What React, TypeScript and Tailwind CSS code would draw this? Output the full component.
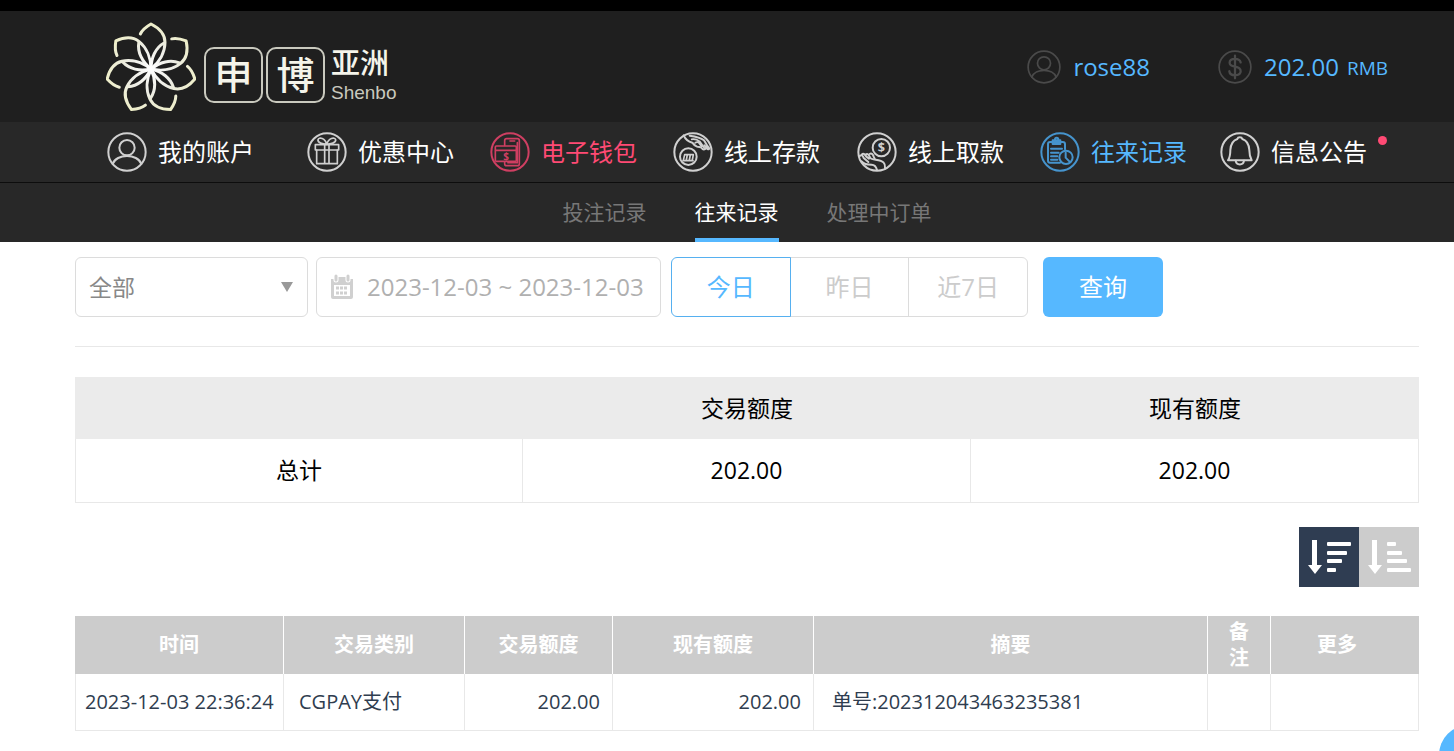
import { ReactNode, useState } from 'react'
import clsx from 'clsx'

type IconProps = {
  className?: string
}

const Ring = ({ className, children }: { className?: string; children: ReactNode }) => (
  <svg
    viewBox="0 0 120 120"
    className={clsx(className, 'shrink-0')}
    fill="none"
    stroke="currentColor"
    strokeWidth="6"
    strokeLinecap="round"
    strokeLinejoin="round"
    aria-hidden="true"
  >
    <circle cx="60" cy="60" r="56" />
    {children}
  </svg>
)

const UserIcon = ({ className }: IconProps) => (
  <Ring className={className}>
    <circle cx="60" cy="47" r="23" />
    <path d="M17 96 C28 64 92 64 103 96" />
  </Ring>
)

const DollarIcon = ({ className }: IconProps) => (
  <Ring className={className}>
    <path d="M80 44 C78 34 70 31 60 31 C49 31 41 36 41 45 C41 55 50 57 60 59 C72 61 80 65 80 75 C80 84 71 89 60 89 C49 89 41 84 40 75 M60 20 V100" strokeWidth="8" />
  </Ring>
)

const GiftIcon = ({ className }: IconProps) => (
  <Ring className={className}>
    <g strokeWidth="5">
      <rect x="25" y="38" width="70" height="16" />
      <path d="M29 54 V95 H91 V54 M53 38 V95 M66 38 V95" />
      <path d="M59 37 C55 18 36 14 33 23 C31 32 47 37 59 37 C71 37 88 32 86 23 C83 14 64 18 59 37 Z" />
    </g>
  </Ring>
)

const WalletIcon = ({ className }: IconProps) => (
  <Ring className={className}>
    <g strokeWidth="5">
      <path d="M44 40 V26 Q44 20 50 20 H82 Q88 20 88 26 V95 Q88 101 82 101 H50 Q44 101 44 95 V90" />
      <path d="M60 27 H74 M82 32 V92 H54" />
      <rect x="16" y="42" width="63" height="46" rx="3" />
      <path d="M17 55 H78" />
    </g>
    <text x="48" y="83" fontSize="30" fontWeight="700" textAnchor="middle" fill="currentColor" stroke="none">
      $
    </text>
  </Ring>
)

const DepositIcon = ({ className }: IconProps) => (
  <Ring className={className}>
    <circle cx="46" cy="74" r="25" />
    <path d="M31 85 L35 68 H43 L40 84 M43 68 H52 L49 84 M52 68 H61 L58 84 M30 86 H60" strokeWidth="5" />
    <path d="M32 10 C38 24 46 29 58 32 C62 38 66 42 72 44 C78 46 84 44 86 48 C90 54 95 52 98 50" />
    <path d="M50 11 C66 13 82 16 93 25 C98 31 100 40 108 48 C110 52 104 54 102 49 L94 40" />
    <path d="M56 22 C66 20 74 24 80 28 L94 48 M66 33 C71 28 78 30 80 36 L86 44" strokeWidth="5" />
  </Ring>
)

const WithdrawIcon = ({ className }: IconProps) => (
  <Ring className={className}>
    <circle cx="73" cy="47" r="26" />
    <text x="73" y="61" fontSize="38" fontWeight="700" textAnchor="middle" fill="currentColor" stroke="none">
      $
    </text>
    <path d="M8 72 C14 66 18 72 20 78 L34 90 M14 68 C20 62 24 68 28 74 L36 80 M26 68 C32 62 36 70 40 78 C46 86 70 80 80 92 C86 98 84 106 84 110" />
    <path d="M38 66 C44 62 48 68 50 74 L53 80 M14 88 C22 98 32 98 44 98 C52 98 58 106 60 114" />
  </Ring>
)

const RecordIcon = ({ className }: IconProps) => (
  <Ring className={className}>
    <path d="M60 92 H30 Q24 92 24 86 V36 Q24 30 30 30 H68 Q75 30 75 36 V52" />
    <rect x="38" y="25" width="23" height="11" />
    <circle cx="50" cy="22" r="5" />
    <path d="M33 50 H66 M33 62 H56 M33 73 H52 M33 83 H52" />
    <circle cx="78" cy="76" r="20" />
    <path d="M77 62 V77 L88 88" />
  </Ring>
)

const BellIcon = ({ className }: IconProps) => (
  <Ring className={className}>
    <path d="M52 21 C54 14 65 14 67 21 C82 26 87 38 88 54 C88 68 90 76 95 85 H24 C30 76 31 68 31 54 C32 38 37 26 52 21 Z" />
    <path d="M47 86 C49 101 70 101 72 86" />
  </Ring>
)

const petals = [0, 1, 2, 3, 4, 5, 6]

const Flower = () => (
  <svg viewBox="-135 -141 270 270" className="w-[90px] h-[90px]" fill="none" aria-hidden="true">
    <defs>
      <radialGradient id="petal" gradientUnits="userSpaceOnUse" cx="0" cy="0" r="138">
        <stop offset="0" stopColor="#ffffff" />
        <stop offset="0.5" stopColor="#ecece4" />
        <stop offset="1" stopColor="#eeeec8" />
      </radialGradient>
    </defs>
    <g stroke="url(#petal)" strokeWidth="9" strokeLinecap="round" strokeLinejoin="round">
      {petals.map((n) => (
        <g key={n} transform={`rotate(${(n * 360) / 7})`}>
          <path d="M-32 -105 C-25 -120 -14 -127 0 -135 C22 -124 42 -106 42 -80 C42 -50 25 -20 0 0" />
          <path d="M39 -78 C14 -64 0 -34 0 0" />
        </g>
      ))}
    </g>
  </svg>
)

const Logo = () => (
  <a href="#home" aria-label="申博亚洲 Shenbo" className="flex items-center text-[#f4f4ea]">
    <Flower />
    <div className="flex items-center gap-[3px] ml-2 mt-4 text-[38px] leading-[50px] font-medium">
      <span className="flex justify-center w-[59px] h-14 border-2 border-[#c9c9be] rounded-[10px]">申</span>
      <span className="flex justify-center w-[59px] h-14 border-2 border-[#c9c9be] rounded-[10px]">博</span>
    </div>
    <div className="flex flex-col ml-1.5 mt-4">
      <span className="text-[29px] leading-8 font-medium">亚洲</span>
      <span className="mt-1 text-[19px] leading-5 text-[#c9c9be] font-['Liberation_Sans',sans-serif]">Shenbo</span>
    </div>
  </a>
)

const navItems = [
  { label: '我的账户', Icon: UserIcon, text: 'text-white', icon: 'text-[#d0d0d0]' },
  { label: '优惠中心', Icon: GiftIcon, text: 'text-white', icon: 'text-[#d0d0d0]' },
  { label: '电子钱包', Icon: WalletIcon, text: 'text-[#ff4a74]', icon: 'text-[#cf3f62]' },
  { label: '线上存款', Icon: DepositIcon, text: 'text-white', icon: 'text-[#d0d0d0]' },
  { label: '线上取款', Icon: WithdrawIcon, text: 'text-white', icon: 'text-[#d0d0d0]' },
  { label: '往来记录', Icon: RecordIcon, text: 'text-[#56b8ff]', icon: 'text-[#4694cd]' },
  { label: '信息公告', Icon: BellIcon, text: 'text-white', icon: 'text-[#d0d0d0]', badge: true },
]

const tabs = ['投注记录', '往来记录', '处理中订单']
const ranges = ['今日', '昨日', '近7日']

const Header = () => (
  <header className="border-t-[11px] border-black bg-[#1f1f1f]">
    <div className="flex justify-between items-center h-[111px] pl-[106px] pr-[66px]">
      <Logo />
      <div className="flex items-center text-2xl text-[#56b8ff]">
        <UserIcon className="w-[34px] h-[34px] mr-3 text-[#4a4a4a]" />
        <span>rose88</span>
        <DollarIcon className="w-[34px] h-[34px] ml-[68px] mr-3 text-[#4a4a4a]" />
        <span>202.00</span>
        <span className="ml-2 mt-1 text-[19px]">RMB</span>
      </div>
    </div>
    <nav className="grid grid-cols-[200fr_183fr_183fr_184fr_183fr_180fr_164fr] items-center h-[60px] pl-[107px] pr-[70px] bg-[#282828]">
      {navItems.map(({ label, Icon, text, icon, badge }) => (
        <a key={label} href="#nav" className={clsx(text, 'flex items-center gap-[11px] text-2xl whitespace-nowrap')}>
          <Icon className={clsx(icon, 'w-10 h-10')} />
          <span className="relative">
            {label}
            {badge && <span className="absolute -right-5 top-0 w-[9px] h-[9px] bg-[#ff4a74] rounded-full" />}
          </span>
        </a>
      ))}
    </nav>
    <nav className="flex justify-center gap-12 h-[60px] pl-[75px] pr-[35px] border-t border-[#0d0d0d] bg-[#282828]">
      {tabs.map((tab) => (
        <a
          key={tab}
          href="#tab"
          className={clsx(
            tab === '往来记录' ? 'border-[#56b8ff] text-white' : 'border-transparent text-[#777]',
            'border-b-4 text-[21px] leading-[59px]'
          )}
        >
          {tab}
        </a>
      ))}
    </nav>
  </header>
)

const CalendarIcon = () => (
  <svg viewBox="0 0 26 26" className="shrink-0 w-[26px] h-[26px]" aria-hidden="true">
    <path
      fillRule="evenodd"
      fill="#d0d0d0"
      d="M5 3 H21 V10 H24 V23 Q24 25 22 25 H4 Q2 25 2 23 V10 H5 Z M5 11 V22 H21 V11 Z"
    />
    <path fill="#d0d0d0" d="M2 5 H24 V11 H2 Z" />
    <path stroke="#ffffff" strokeWidth="5" strokeLinecap="round" d="M7 3 V6 M19 3 V6" />
    <path stroke="#d0d0d0" strokeWidth="3" strokeLinecap="round" d="M7 2 V6 M19 2 V6" />
    <path stroke="#d0d0d0" strokeWidth="3" strokeDasharray="3 1" d="M7 14 H19 M7 19 H19" />
  </svg>
)

const Filters = () => {
  const [range, setRange] = useState('今日')

  return (
    <form className="flex pb-[29px] border-b border-[#e8e8e8]" onSubmit={(e) => e.preventDefault()}>
      <div className="relative w-[233px] h-[60px]">
        <select
          aria-label="交易类别"
          className="w-full h-full pl-[13px] border border-[#dcdcdc] rounded-md bg-white text-[23px] text-[#888] appearance-none"
        >
          <option>全部</option>
        </select>
        <svg
          viewBox="0 0 14 10"
          className="absolute right-3.5 top-1/2 w-3.5 h-2.5 -translate-y-1/2 pointer-events-none"
          aria-hidden="true"
        >
          <path d="M1 0 H13 L7 10 Z" fill="#999" />
        </svg>
      </div>
      <label className="flex items-center w-[345px] h-[60px] ml-2 pl-3 border border-[#dcdcdc] rounded-md">
        <CalendarIcon />
        <input
          aria-label="日期"
          defaultValue="2023-12-03 ~ 2023-12-03"
          className="w-full ml-3 text-2xl text-[#b0b0b0] outline-none"
        />
      </label>
      <div className="flex w-[357px] ml-2.5">
        {ranges.map((r) => (
          <button
            key={r}
            type="button"
            onClick={() => setRange(r)}
            className={clsx(
              r === range ? 'relative border-[#56b0f0] text-[#56b8ff]' : 'border-[#dcdcdc] text-[#ccc]',
              'grow basis-0 h-[60px] -mr-px border first:rounded-l-md last:mr-0 last:rounded-r-md text-2xl'
            )}
          >
            {r}
          </button>
        ))}
      </div>
      <button type="submit" className="w-[120px] h-[60px] ml-[15px] rounded-md bg-[#56b8ff] text-2xl text-white">
        查询
      </button>
    </form>
  )
}

const Summary = () => (
  <table className="w-full mt-[30px] table-fixed border-separate border-spacing-0 text-[23px] text-black text-center">
    <thead>
      <tr className="h-[62px] bg-[#ebebeb]">
        <th />
        <th className="font-normal">交易额度</th>
        <th className="font-normal">现有额度</th>
      </tr>
    </thead>
    <tbody>
      <tr className="h-16">
        <td className="border-x border-b border-[#e8e8e8]">总计</td>
        <td className="border-r border-b border-[#e8e8e8]">202.00</td>
        <td className="border-r border-b border-[#e8e8e8]">202.00</td>
      </tr>
    </tbody>
  </table>
)

const SortButtons = () => (
  <div className="flex justify-end mt-6">
    <button type="button" aria-label="降序" className="w-[60px] h-[60px] bg-[#2f3d52]">
      <svg viewBox="0 0 60 60" fill="#ffffff" aria-hidden="true">
        <path d="M13 13 H18 V38 H23 L16 47 L9 38 H13 Z" />
        <rect x="28" y="15" width="24" height="4" rx="1" />
        <rect x="28" y="24" width="20" height="4" rx="1" />
        <rect x="28" y="32" width="15" height="4" rx="1" />
        <rect x="28" y="41" width="9" height="4" rx="1" />
      </svg>
    </button>
    <button type="button" aria-label="升序" className="w-[60px] h-[60px] bg-[#ccc]">
      <svg viewBox="0 0 60 60" fill="#ffffff" aria-hidden="true">
        <path d="M13 13 H18 V38 H23 L16 47 L9 38 H13 Z" />
        <rect x="28" y="15" width="9" height="4" rx="1" />
        <rect x="28" y="24" width="15" height="4" rx="1" />
        <rect x="28" y="32" width="20" height="4" rx="1" />
        <rect x="28" y="41" width="24" height="4" rx="1" />
      </svg>
    </button>
  </div>
)

const columns = [
  { label: '时间', width: 'w-[209px] px-5' },
  { label: '交易类别', width: 'w-[181px] px-5' },
  { label: '交易额度', width: 'w-[148px] px-5' },
  { label: '现有额度', width: 'w-[201px] px-5' },
  { label: '摘要', width: 'px-5' },
  { label: '备注', width: 'w-[63px] px-5' },
  { label: '更多', width: 'w-[148px] pl-1 pr-5' },
]

const Records = () => (
  <table className="w-full mt-[29px] table-fixed border-separate border-spacing-0 text-xl">
    <thead>
      <tr className="h-[58px] bg-[#ccc] text-white">
        {columns.map(({ label, width }) => (
          <th key={label} className={clsx(width, 'border-r border-white last:border-r-0 leading-[26px] font-bold')}>
            {label}
          </th>
        ))}
      </tr>
    </thead>
    <tbody>
      <tr className="h-[57px] text-[#2f3d4f] whitespace-nowrap">
        <td className="pl-[9px] border-x border-b border-[#e8e8e8]">2023-12-03 22:36:24</td>
        <td className="pl-[15px] border-r border-b border-[#e8e8e8]">CGPAY支付</td>
        <td className="pr-3 border-r border-b border-[#e8e8e8] text-right">202.00</td>
        <td className="pr-3 border-r border-b border-[#e8e8e8] text-right">202.00</td>
        <td className="pl-[18px] border-r border-b border-[#e8e8e8]">单号:202312043463235381</td>
        <td className="border-r border-b border-[#e8e8e8]" />
        <td className="border-r border-b border-[#e8e8e8]" />
      </tr>
    </tbody>
  </table>
)

const App = () => {
  return (
    <div className="min-h-screen bg-white font-['Open_Sans','Noto_Sans_CJK_SC',sans-serif]">
      <Header />
      <main className="pt-[15px] pb-5 pl-[75px] pr-[35px]">
        <Filters />
        <Summary />
        <SortButtons />
        <Records />
      </main>
      <button
        type="button"
        aria-label="客服"
        className="fixed -right-[45px] -bottom-[34px] w-[60px] h-[60px] bg-[#56b8ff] rounded-full"
      />
    </div>
  )
}

export default App
